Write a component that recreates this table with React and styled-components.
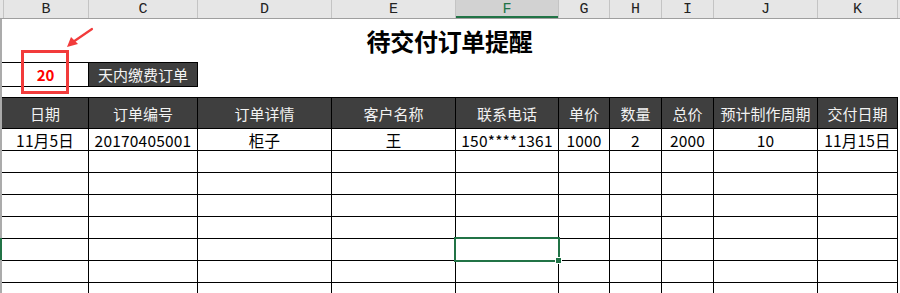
import React from 'react';
import styled, { createGlobalStyle } from 'styled-components';

const GlobalStyle = createGlobalStyle`
  html, body {
    margin: 0;
    padding: 0;
    background: #fff;
  }
  body {
    width: 900px;
    height: 293px;
    overflow: hidden;
    font-family: "Noto Sans CJK SC", "Noto Sans", sans-serif;
  }
`;

const Page = styled.div`
  position: relative;
  width: 900px;
  height: 293px;
  overflow: hidden;
  background: #fff;
`;

const ColumnBar = styled.div`
  display: flex;
  height: 18px;
  background: #e6e6e6;
  border-bottom: 1px solid #9f9f9f;
`;

const ColumnHead = styled.div`
  box-sizing: border-box;
  width: ${(p) => p.$w}px;
  height: 18px;
  border-left: ${(p) => (p.$edge ? 'none' : '1px solid #c4c4c4')};
  display: flex;
  align-items: center;
  justify-content: center;
  font-family: "Liberation Mono", "DejaVu Sans Mono", monospace;
  font-size: 15px;
  color: ${(p) => (p.$active ? '#217346' : '#222')};
  background: ${(p) => (p.$active ? '#d2d2d2' : 'transparent')};
  box-shadow: ${(p) => (p.$active ? 'inset 0 -2px 0 #217346' : 'none')};
`;

const Body = styled.div`
  display: flex;
`;

const RowStrip = styled.div`
  width: 2px;
  flex: none;
  background: linear-gradient(
    to bottom,
    #ababab 0,
    #ababab 219px,
    #217346 219px,
    #217346 241px,
    #ababab 241px
  );
  height: 274px;
`;

const Sheet = styled.div`
  display: flex;
  flex-direction: column;
  width: 896px;
`;

const Title = styled.div`
  height: 43px;
  width: 895px;
  display: flex;
  align-items: center;
  justify-content: center;
  font-size: 24px;
  font-weight: 700;
  color: #000;
  letter-spacing: -0.3px;
`;

const InfoRow = styled.div`
  display: flex;
  height: 25px;
`;

const DaysCell = styled.div`
  box-sizing: border-box;
  width: 86px;
  height: 25px;
  border-top: 1px solid #000;
  border-bottom: 1px solid #000;
  display: flex;
  align-items: center;
  justify-content: center;
  color: #ff0000;
  font-weight: 700;
  font-size: 15px;
  padding-left: 1px;
`;

const LabelBox = styled.div`
  box-sizing: border-box;
  width: 110px;
  height: 25px;
  background: #3f3f3f;
  border: 1px solid #000;
  color: #f4f4f4;
  font-size: 15px;
  display: flex;
  align-items: center;
  justify-content: center;
`;

const Spacer = styled.div`
  height: 10px;
`;

const Grid = styled.div`
  display: grid;
  grid-template-columns: 86px 108px 133px 123px 102px 50px 51px 51px 103px 79px;
  grid-template-rows: 30px;
  grid-auto-rows: 21px;
  gap: 1px;
  background: #000;
  border-top: 1px solid #000;
  border-right: 1px solid #000;
  width: 895px;
`;

const HeadCell = styled.div`
  background: #3f3f3f;
  color: #f2f2f2;
  font-size: 15px;
  display: flex;
  align-items: center;
  justify-content: center;
  white-space: nowrap;
`;

const Cell = styled.div`
  position: relative;
  z-index: ${(p) => (p.$selected ? 2 : 'auto')};
  background: #fff;
  color: #000;
  font-size: 15.5px;
  letter-spacing: 0.2px;
  display: flex;
  align-items: center;
  justify-content: center;
  white-space: nowrap;
`;

const Selection = styled.div`
  position: absolute;
  left: -2px;
  top: -2px;
  right: -2px;
  bottom: -2px;
  border: 2px solid #217346;
  pointer-events: none;

  &::after {
    content: '';
    position: absolute;
    right: -4px;
    bottom: -4px;
    width: 5px;
    height: 5px;
    background: #217346;
    border: 1px solid #fff;
  }
`;

const RedFrame = styled.div`
  position: absolute;
  left: 21px;
  top: 50px;
  width: 48px;
  height: 44px;
  box-sizing: border-box;
  border: 3px solid #f23b3b;
`;

const Arrow = styled.svg`
  position: absolute;
  left: 64px;
  top: 26px;
`;

const columns = [
  { l: '', w: 3, edge: true },
  { l: 'B', w: 85 },
  { l: 'C', w: 109 },
  { l: 'D', w: 134 },
  { l: 'E', w: 124 },
  { l: 'F', w: 103, active: true },
  { l: 'G', w: 51 },
  { l: 'H', w: 52 },
  { l: 'I', w: 52 },
  { l: 'J', w: 104 },
  { l: 'K', w: 80 },
  { l: '', w: 3 },
];

const headers = ['日期', '订单编号', '订单详情', '客户名称', '联系电话', '单价', '数量', '总价', '预计制作周期', '交付日期'];
const firstRow = ['11月5日', '20170405001', '柜子', '王', '150****1361', '1000', '2', '2000', '10', '11月15日'];

const rows = [firstRow, ...Array.from({ length: 7 }, () => Array(10).fill(''))];

export default function App() {
  return (
    <Page>
      <GlobalStyle />
      <ColumnBar>
        {columns.map((c, i) => (
          <ColumnHead key={i} $w={c.w} $edge={c.edge} $active={c.active}>
            {c.l}
          </ColumnHead>
        ))}
      </ColumnBar>
      <Body>
        <RowStrip />
        <Sheet>
          <Title>待交付订单提醒</Title>
          <InfoRow>
            <DaysCell>20</DaysCell>
            <LabelBox>天内缴费订单</LabelBox>
          </InfoRow>
          <Spacer />
          <Grid>
            {headers.map((h) => (
              <HeadCell key={h}>{h}</HeadCell>
            ))}
            {rows.map((r, ri) =>
              r.map((v, ci) => {
                const selected = ri === 5 && ci === 4;
                return (
                  <Cell key={`${ri}-${ci}`} $selected={selected}>
                    {v}
                    {selected && <Selection />}
                  </Cell>
                );
              })
            )}
          </Grid>
        </Sheet>
      </Body>
      <RedFrame />
      <Arrow width="32" height="24" viewBox="0 0 32 24">
        <line x1="28" y1="3" x2="9" y2="16" stroke="#f23b3b" strokeWidth="2.2" strokeLinecap="round" />
        <polygon points="3,21 7,11 14,18" fill="#f23b3b" />
      </Arrow>
    </Page>
  );
}
